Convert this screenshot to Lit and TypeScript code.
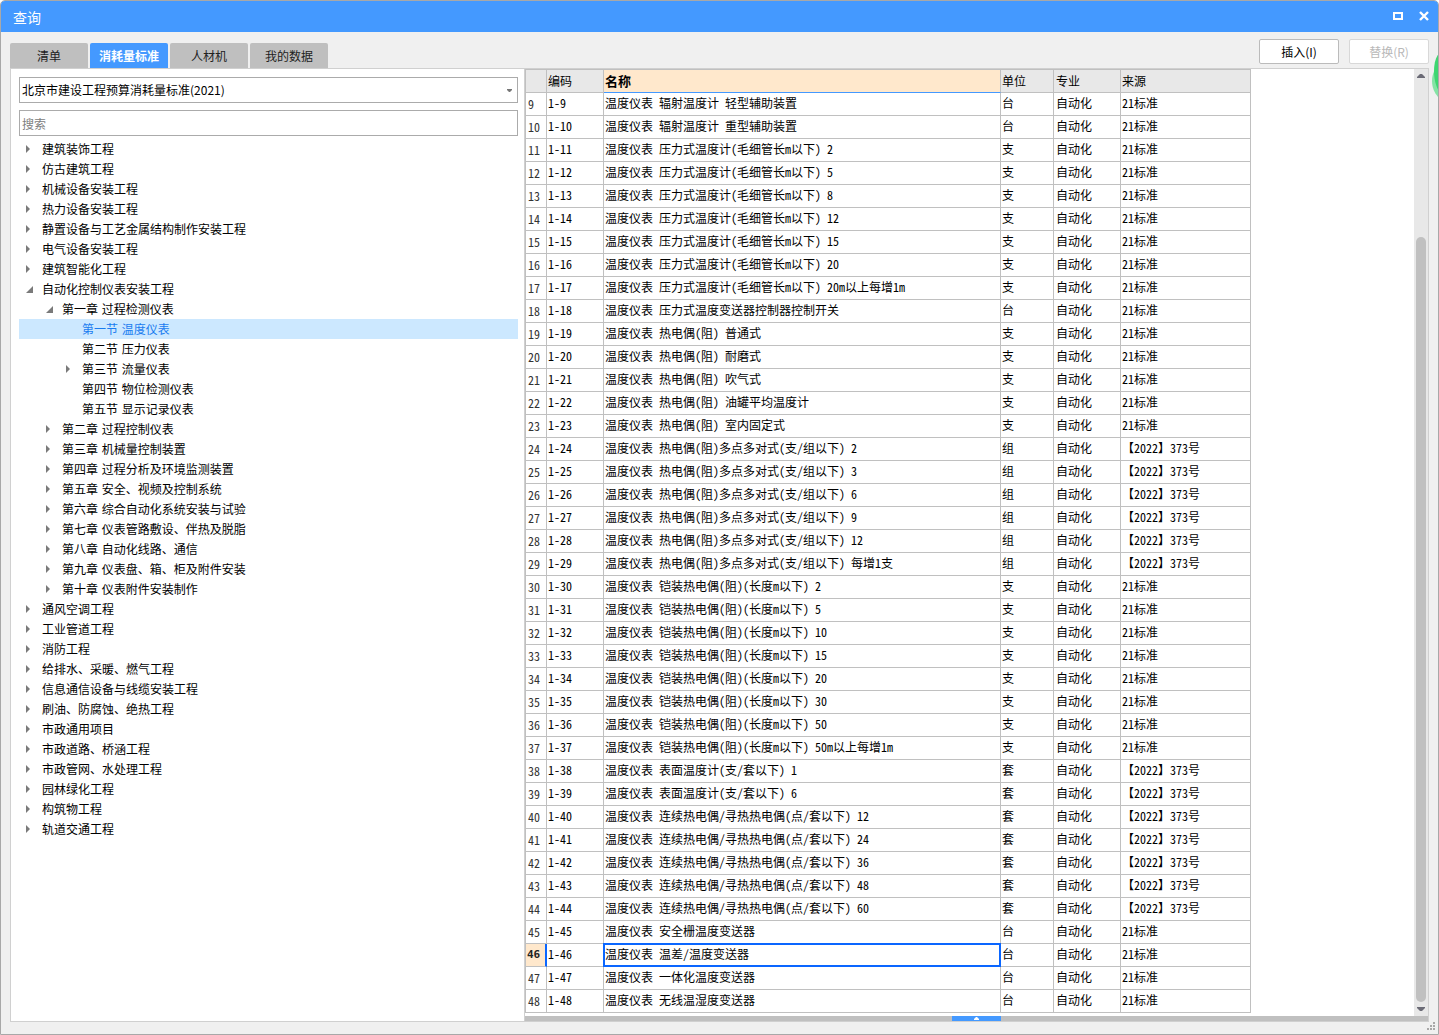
import { LitElement, html, css, svg } from "lit";
import { customElement, state } from "lit/decorators.js";

interface Node {
  text: string;
  level: number;
  mark: "closed" | "open" | "leaf";
}

const n = (text: string, level = 0, mark: Node["mark"] = "closed"): Node => ({ text, level, mark });

const TREE: Node[] = [
  n("建筑装饰工程"),
  n("仿古建筑工程"),
  n("机械设备安装工程"),
  n("热力设备安装工程"),
  n("静置设备与工艺金属结构制作安装工程"),
  n("电气设备安装工程"),
  n("建筑智能化工程"),
  n("自动化控制仪表安装工程", 0, "open"),
  n("第一章 过程检测仪表", 1, "open"),
  n("第一节 温度仪表", 2, "leaf"),
  n("第二节 压力仪表", 2, "leaf"),
  n("第三节 流量仪表", 2),
  n("第四节 物位检测仪表", 2, "leaf"),
  n("第五节 显示记录仪表", 2, "leaf"),
  n("第二章 过程控制仪表", 1),
  n("第三章 机械量控制装置", 1),
  n("第四章 过程分析及环境监测装置", 1),
  n("第五章 安全、视频及控制系统", 1),
  n("第六章 综合自动化系统安装与试验", 1),
  n("第七章 仪表管路敷设、伴热及脱脂", 1),
  n("第八章 自动化线路、通信", 1),
  n("第九章 仪表盘、箱、柜及附件安装", 1),
  n("第十章 仪表附件安装制作", 1),
  n("通风空调工程"),
  n("工业管道工程"),
  n("消防工程"),
  n("给排水、采暖、燃气工程"),
  n("信息通信设备与线缆安装工程"),
  n("刷油、防腐蚀、绝热工程"),
  n("市政通用项目"),
  n("市政道路、桥涵工程"),
  n("市政管网、水处理工程"),
  n("园林绿化工程"),
  n("构筑物工程"),
  n("轨道交通工程"),
];

const A = "21标准";
const B = "【2022】373号";
const FIRST = 9;
const ROWS: [string, string, string][] = [
  ["辐射温度计 轻型辅助装置", "台", A],
  ["辐射温度计 重型辅助装置", "台", A],
  ["压力式温度计(毛细管长m以下) 2", "支", A],
  ["压力式温度计(毛细管长m以下) 5", "支", A],
  ["压力式温度计(毛细管长m以下) 8", "支", A],
  ["压力式温度计(毛细管长m以下) 12", "支", A],
  ["压力式温度计(毛细管长m以下) 15", "支", A],
  ["压力式温度计(毛细管长m以下) 20", "支", A],
  ["压力式温度计(毛细管长m以下) 20m以上每增1m", "支", A],
  ["压力式温度变送器控制器控制开关", "台", A],
  ["热电偶(阻) 普通式", "支", A],
  ["热电偶(阻) 耐磨式", "支", A],
  ["热电偶(阻) 吹气式", "支", A],
  ["热电偶(阻) 油罐平均温度计", "支", A],
  ["热电偶(阻) 室内固定式", "支", A],
  ["热电偶(阻)多点多对式(支/组以下) 2", "组", B],
  ["热电偶(阻)多点多对式(支/组以下) 3", "组", B],
  ["热电偶(阻)多点多对式(支/组以下) 6", "组", B],
  ["热电偶(阻)多点多对式(支/组以下) 9", "组", B],
  ["热电偶(阻)多点多对式(支/组以下) 12", "组", B],
  ["热电偶(阻)多点多对式(支/组以下) 每增1支", "组", B],
  ["铠装热电偶(阻)(长度m以下) 2", "支", A],
  ["铠装热电偶(阻)(长度m以下) 5", "支", A],
  ["铠装热电偶(阻)(长度m以下) 10", "支", A],
  ["铠装热电偶(阻)(长度m以下) 15", "支", A],
  ["铠装热电偶(阻)(长度m以下) 20", "支", A],
  ["铠装热电偶(阻)(长度m以下) 30", "支", A],
  ["铠装热电偶(阻)(长度m以下) 50", "支", A],
  ["铠装热电偶(阻)(长度m以下) 50m以上每增1m", "支", A],
  ["表面温度计(支/套以下) 1", "套", B],
  ["表面温度计(支/套以下) 6", "套", B],
  ["连续热电偶/寻热热电偶(点/套以下) 12", "套", B],
  ["连续热电偶/寻热热电偶(点/套以下) 24", "套", B],
  ["连续热电偶/寻热热电偶(点/套以下) 36", "套", B],
  ["连续热电偶/寻热热电偶(点/套以下) 48", "套", B],
  ["连续热电偶/寻热热电偶(点/套以下) 60", "套", B],
  ["安全栅温度变送器", "台", A],
  ["温差/温度变送器", "台", A],
  ["一体化温度变送器", "台", A],
  ["无线温湿度变送器", "台", A],
];

const icon = (w: number, h: number, body: unknown) =>
  html`<svg width=${w} height=${h} viewBox="0 0 ${w} ${h}" aria-hidden="true">${body}</svg>`;

const MARKS = {
  closed: icon(8, 8, svg`<path d="M0 0L4 4L0 8Z" fill="#7a7a7a"/>`),
  open: icon(8, 8, svg`<path d="M7 1V8H0Z" fill="#7a7a7a"/>`),
  leaf: icon(8, 8, svg``),
};

@customElement("category-tree")
class CategoryTree extends LitElement {
  @state() private selected = 9;

  static styles = css`
    :host { display: block; }
    .list { list-style: none; margin: 0; padding: 0; }
    .row {
      display: flex; align-items: center; gap: 8px; width: 100%; height: 20px;
      border: 0; padding: 0 0 0 7px; background: none; color: #000;
      font: 12px/20px "DejaVu Sans", "Noto Sans CJK SC", sans-serif;
      text-align: left; white-space: nowrap;
    }
    .l1 { padding-left: 27px; }
    .l2 { padding-left: 47px; }
    .selected { background: #cce8ff; color: #1a7cf0; }
    .label { padding-top: 2px; }
    svg { flex: none; display: block; }
  `;

  render() {
    return html`<ul class="list">
      ${TREE.map((item, i) => html`<li>
        <button class="row l${item.level} ${i === this.selected ? "selected" : ""}"
          @click=${() => (this.selected = i)}>${MARKS[item.mark]}<span class="label">${item.text}</span></button>
      </li>`)}
    </ul>`;
  }
}

@customElement("quota-table")
class QuotaTable extends LitElement {
  @state() private current = 46;

  static styles = css`
    :host { display: block; }
    table {
      table-layout: fixed; width: 726px; border-collapse: separate; border-spacing: 0;
      border: solid #c0c0c0; border-width: 1px 0 0 1px; color: #000;
      font: 12px/20px "Noto Sans CJK SC", sans-serif;
      font-feature-settings: "hwid";
    }
    th, td {
      box-sizing: border-box; height: 23px; padding: 0 1px 2px; overflow: hidden;
      border: solid #c0c0c0; border-width: 0 1px 1px 0;
      text-align: left; font-weight: 400; white-space: nowrap;
    }
    thead th { background: #e8e8e8; padding-bottom: 0; }
    thead .name { background: #ffe8cc; border-bottom-color: #4499ff; font-weight: 700; font-size: 13px; }
    .no { width: 21px; } .code { width: 57px; } .name { width: 397px; }
    .unit { width: 53px; } .major { width: 67px; padding-left: 2px; } .source { width: 130px; }
    tbody .no { padding: 0 0 0 2px; color: #333; }
    .active .no {
      background: #ffe8cc; border-right: 2px solid #0a66ff; padding-left: 1px;
      font: 700 11px/20px "DejaVu Sans Mono", monospace; color: #222;
    }
    .active .name { position: relative; overflow: visible; }
    .active .name::after { content: ""; position: absolute; inset: -1px; border: 2px solid #0a66ff; }
  `;

  render() {
    return html`<table>
      <thead><tr>
        <th class="no"></th><th class="code">编码</th><th class="name">名称</th>
        <th class="unit">单位</th><th class="major">专业</th><th class="source">来源</th>
      </tr></thead>
      <tbody>${ROWS.map(([name, unit, source], i) => {
        const no = FIRST + i;
        return html`<tr class=${no === this.current ? "active" : ""} @click=${() => (this.current = no)}>
          <th class="no" scope="row">${no}</th><td class="code">1-${no}</td>
          <td class="name">温度仪表 ${name}</td><td class="unit">${unit}</td>
          <td class="major">自动化</td><td class="source">${source}</td>
        </tr>`;
      })}</tbody>
    </table>`;
  }
}

@customElement("app-root")
class AppRoot extends LitElement {
  @state() private tab = 1;

  static styles = css`
    :host { display: block; background: #fff; color: #000; font: 12px/20px "Noto Sans CJK SC", sans-serif; }
    * { box-sizing: border-box; }
    svg { display: block; }
    button, select, input { font: inherit; color: inherit; margin: 0; }
    .window {
      position: relative; display: flex; flex-direction: column; min-height: 100vh; overflow: hidden;
      border: 1px solid #a8a8a8; border-radius: 5px 5px 0 0; background: #f0f0f0;
    }
    .title {
      display: flex; align-items: center; justify-content: space-between; height: 31px;
      padding: 0 9px 0 12px; background: #4499ff; color: #fff;
    }
    .title h1 { margin: 0; font-size: 14px; font-weight: 400; }
    .controls { display: flex; gap: 16px; padding-bottom: 2px; }
    .controls button { border: 0; padding: 0; background: none; }
    .bar { display: flex; justify-content: space-between; align-items: flex-end; height: 36px; padding: 0 9px; }
    .tabs { display: flex; gap: 2px; }
    .tab { width: 78px; height: 25px; padding: 0; border: 0; border-radius: 2px 2px 0 0; background: #bfbfbf; color: #222; }
    .tab.on { background: #4499ff; color: #fff; font-weight: 700; }
    .actions { display: flex; gap: 10px; padding-bottom: 4px; }
    .action { width: 80px; height: 25px; padding: 0; border: 1px solid #bbb; border-radius: 2px; background: #fff; }
    .action:disabled { border-color: #d8d8d8; color: #b8b8b8; }
    .panel {
      display: grid; grid-template-columns: 513px 1fr; flex: 1;
      margin: 0 9px 12px; border: 1px solid #d0d0d0; background: #fff;
    }
    .side { padding: 8px 6px 8px 8px; }
    .combo { display: grid; align-items: center; margin-bottom: 7px; }
    .combo > * { grid-area: 1 / 1; }
    .combo svg { justify-self: end; margin-right: 6px; pointer-events: none; }
    .field {
      display: block; width: 100%; height: 26px; padding: 0 2px; border: 1px solid #ababab; border-radius: 0;
      background: #fff; appearance: none; outline: none;
    }
    .search { margin-bottom: 3px; }
    .search::placeholder { color: #808080; opacity: 1; }
    .main { display: flex; flex-direction: column; border-left: 1px solid #d0d0d0; min-width: 0; }
    .view { display: flex; flex: 1; justify-content: space-between; }
    .grid { padding-bottom: 3px; }
    .scroll { display: flex; flex-direction: column; align-items: center; width: 14px; padding: 5px 0; background: #e8e8e8; }
    .track { flex: 1; display: flex; flex-direction: column; width: 10px; margin: 4px 0 5px; }
    .before { flex: 155; }
    .thumb { flex: 765; border-radius: 5px; background: #c0c0c0; }
    .split { display: grid; grid-template-columns: 427px 49px 1fr; height: 5px; background: #c0c0c0; }
    .fold { grid-column: 2; display: grid; place-items: center; border: 0; padding: 0; background: #4499ff; }
    .blob { position: absolute; right: -1px; top: 52px; }
    .grip { position: absolute; right: 3px; bottom: 4px; }
  `;

  render() {
    return html`<main class="window">
      <header class="title">
        <h1>查询</h1>
        <div class="controls">
          <button aria-label="最大化">${icon(10, 10, svg`<path d="M1 2H9V8H1Z" fill="none" stroke="#fff" stroke-width="2"/>`)}</button>
          <button aria-label="关闭">${icon(10, 10, svg`<path d="M1 1L9 9M9 1L1 9" stroke="#fff" stroke-width="2.4"/>`)}</button>
        </div>
      </header>
      <div class="bar">
        <nav class="tabs">${["清单", "消耗量标准", "人材机", "我的数据"].map((t, i) => html`
          <button class="tab ${i === this.tab ? "on" : ""}" @click=${() => (this.tab = i)}>${t}</button>`)}
        </nav>
        <div class="actions">
          <button class="action">插入(I)</button>
          <button class="action" disabled>替换(R)</button>
        </div>
      </div>
      <section class="panel">
        <aside class="side">
          <div class="combo">
            <select class="field" aria-label="标准"><option>北京市建设工程预算消耗量标准(2021)</option></select>
            ${icon(5, 3, svg`<path d="M0 0H5V1L3 3H2L0 1Z" fill="#777"/>`)}
          </div>
          <input class="field search" type="text" placeholder="搜索" aria-label="搜索">
          <category-tree></category-tree>
        </aside>
        <div class="main">
          <div class="view">
            <quota-table class="grid"></quota-table>
            <div class="scroll">
              ${icon(8, 4, svg`<path d="M0 4V3L3 0H5L8 3V4Z" fill="#6b6b76"/>`)}
              <div class="track"><div class="before"></div><div class="thumb"></div></div>
              ${icon(8, 4, svg`<path d="M0 0H8V1L5 4H3L0 1Z" fill="#6b6b76"/>`)}
            </div>
          </div>
          <div class="split"><button class="fold" aria-label="展开">${icon(5, 3, svg`<path d="M0 3V2L2 0H3L5 2V3Z" fill="#fff"/>`)}</button></div>
        </div>
      </section>
      <div class="blob">${icon(7, 46, svg`
        <path d="M7 13C2 16 0 22 0 28C0 35 3 41 7 45Z" fill="#85e3a5"/>
        <path d="M7 0C3 5 2 12 2 18C2 26 4 34 7 38Z" fill="#3ed671"/>`)}</div>
      <div class="grip">${icon(8, 8, svg`<path d="M6 0h2v2H6zM3 3h2v2H3zM6 3h2v2H6zM0 6h2v2H0zM3 6h2v2H3zM6 6h2v2H6z" fill="#a8a8a8"/>`)}</div>
    </main>`;
  }
}
